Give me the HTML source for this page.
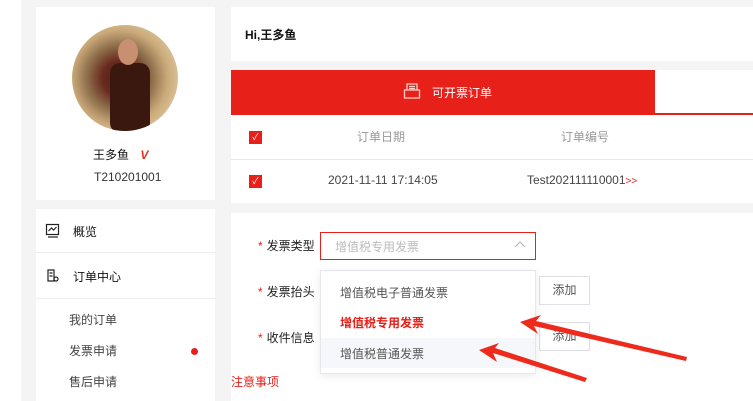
<!DOCTYPE html>
<html><head><meta charset="utf-8"><style>
*{margin:0;padding:0;box-sizing:border-box}
body{width:753px;height:401px;overflow:hidden;background:#f4f4f4;font-family:"Liberation Sans","Noto Sans CJK SC",sans-serif;font-size:12px;color:#333;position:relative}
.a{position:absolute}
.w{background:#fff}
.cb{position:absolute;width:13px;height:13px;background:#e8201a;color:#fff;font-size:9px;line-height:13px;text-align:center}
.star{color:#e8201a;margin-right:4px}
</style></head><body>
<div class="a w" style="left:0;top:0;width:21px;height:401px"></div>
<div class="a w" style="left:36px;top:7px;width:179px;height:193px"></div>
<div class="a" style="left:72px;top:25px;width:106px;height:106px;border-radius:50%;background:radial-gradient(circle at 45% 50%,#4a2018 0,#6a2a1e 22%,#8a6a48 40%,#c8a878 60%,#e0c8a0 80%);overflow:hidden">
<div class="a" style="left:38px;top:38px;width:40px;height:70px;background:#3a1810;border-radius:10px"></div>
<div class="a" style="left:46px;top:14px;width:20px;height:26px;background:#c89070;border-radius:50%"></div>
</div>
<div class="a" style="left:93px;top:146px;font-size:12px;color:#111">王多鱼 <span style="color:#e03020;font-weight:bold;font-style:italic;margin-left:8px">V</span></div>
<div class="a" style="left:94px;top:170px;font-size:12px;color:#333">T210201001</div>

<div class="a w" style="left:36px;top:209px;width:179px;height:192px"></div>
<svg class="a" style="left:45px;top:223px" width="16" height="16" viewBox="0 0 16 16" fill="none" stroke="#222" stroke-width="1.2"><rect x="1.5" y="1.5" width="12" height="10"/><path d="M3.5 8l3-3 2 2 3-3"/><path d="M3 14h10"/></svg>
<div class="a" style="left:73px;top:223px;font-size:12px;color:#111">概览</div>
<div class="a" style="left:36px;top:252px;width:179px;height:1px;background:#eee"></div>
<svg class="a" style="left:45px;top:268px" width="16" height="16" viewBox="0 0 16 16" fill="none" stroke="#222" stroke-width="1.2"><path d="M3 2h6v11H3z"/><path d="M4.5 5h3M4.5 8h3"/><circle cx="11" cy="11" r="2"/></svg>
<div class="a" style="left:73px;top:268px;font-size:12px;color:#111">订单中心</div>
<div class="a" style="left:36px;top:298px;width:179px;height:1px;background:#eee"></div>
<div class="a" style="left:69px;top:311px;color:#444">我的订单</div>
<div class="a" style="left:69px;top:342px;color:#444">发票申请</div>
<div class="a" style="left:191px;top:348px;width:7px;height:7px;border-radius:50%;background:#e8201a"></div>
<div class="a" style="left:69px;top:373px;color:#444">售后申请</div>

<div class="a w" style="left:231px;top:7px;width:522px;height:54px"></div>
<div class="a" style="left:245px;top:26px;font-weight:bold;color:#111;font-size:12px">Hi,王多鱼</div>
<div class="a w" style="left:231px;top:70px;width:522px;height:133px"></div>
<div class="a" style="left:231px;top:70px;width:424px;height:45px;background:#e8201a"></div>
<div class="a" style="left:655px;top:113px;width:98px;height:2px;background:#e8201a"></div>
<svg class="a" style="left:403px;top:82px" width="18" height="18" viewBox="0 0 18 18" fill="none" stroke="#ffd0c8" stroke-width="1.3"><path d="M4 8V2h10v6"/><path d="M6 4.5h6M6 6.5h6"/><rect x="1.5" y="8" width="15" height="8"/></svg>
<div class="a" style="left:432px;top:84px;color:#fff;font-size:12px">可开票订单</div>
<div class="cb" style="left:249px;top:131px">✓</div>
<div class="a" style="left:357px;top:128px;color:#999">订单日期</div>
<div class="a" style="left:561px;top:128px;color:#999">订单编号</div>
<div class="a" style="left:231px;top:159px;width:522px;height:1px;background:#e8e8ee"></div>
<div class="cb" style="left:249px;top:175px">✓</div>
<div class="a" style="left:328px;top:173px;color:#444">2021-11-11 17:14:05</div>
<div class="a" style="left:527px;top:173px;color:#444">Test202111110001<span style="color:#e8201a;font-size:10px">&gt;&gt;</span></div>

<div class="a w" style="left:231px;top:213px;width:522px;height:188px"></div>
<div class="a" style="left:258px;top:237px;color:#222"><span class="star">*</span>发票类型</div>
<div class="a" style="left:258px;top:283px;color:#222"><span class="star">*</span>发票抬头</div>
<div class="a" style="left:258px;top:329px;color:#222"><span class="star">*</span>收件信息</div>
<div class="a" style="left:320px;top:232px;width:216px;height:28px;border:1px solid #e8201a"></div>
<div class="a" style="left:335px;top:238px;color:#bbb">增值税专用发票</div>
<svg class="a" style="left:514px;top:240px" width="12" height="8" viewBox="0 0 12 8" fill="none" stroke="#bbb" stroke-width="1.2"><path d="M1 7l5-5 5 5"/></svg>
<div class="a" style="left:539px;top:276px;width:51px;height:29px;border:1px solid #dcdfe6;color:#555;text-align:center;line-height:27px">添加</div>
<div class="a" style="left:539px;top:322px;width:51px;height:29px;border:1px solid #dcdfe6;color:#555;text-align:center;line-height:27px">添加</div>
<div class="a w" style="left:320px;top:270px;width:216px;height:104px;border:1px solid #e4e7ed;box-shadow:0 2px 8px rgba(0,0,0,.08)"></div>
<div class="a" style="left:321px;top:338px;width:214px;height:30px;background:#f5f7fa"></div>
<div class="a" style="left:340px;top:284px;color:#555">增值税电子普通发票</div>
<div class="a" style="left:340px;top:314px;color:#e8201a;font-weight:bold">增值税专用发票</div>
<div class="a" style="left:340px;top:345px;color:#555">增值税普通发票</div>
<div class="a" style="left:231px;top:373px;color:#e8201a">注意事项</div>
<svg class="a" style="left:0;top:0" width="753" height="401"><polygon points="520,322 541,315 536,321 687,357 686,361 534,326 538,334" fill="#ee2a1c"/><polygon points="479,350 499,343 495,348 587,378 585,382 493,353 497,362" fill="#ee2a1c"/></svg>
</body></html>
